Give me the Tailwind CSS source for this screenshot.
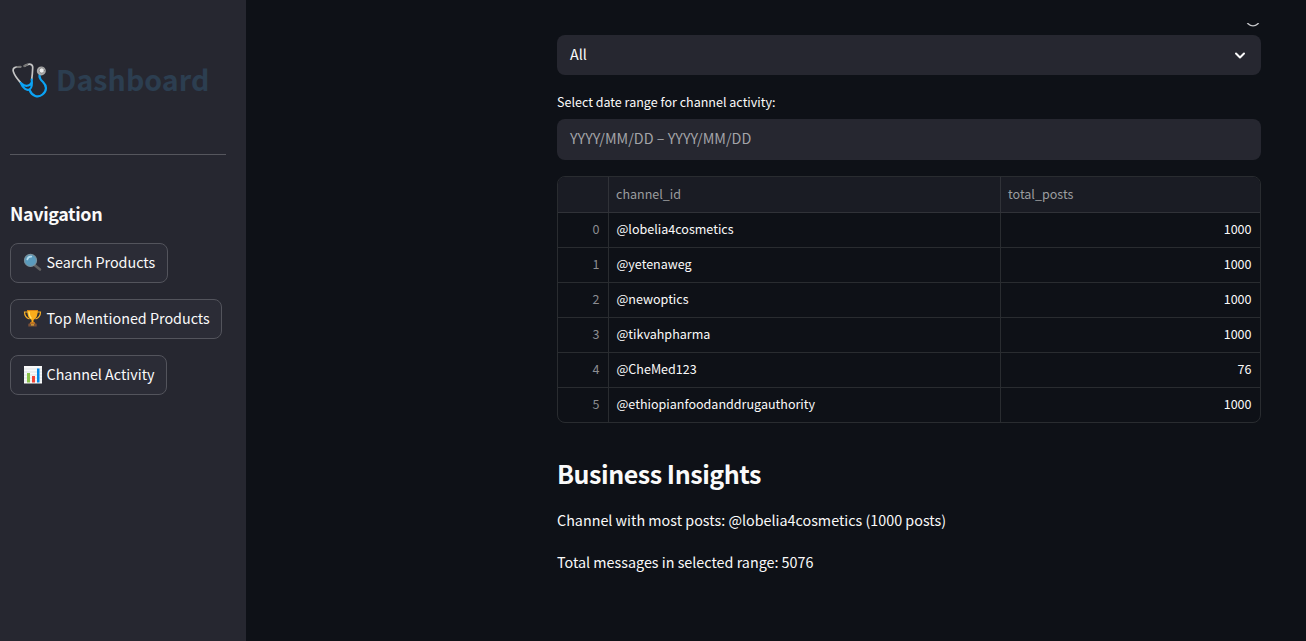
<!DOCTYPE html>
<html lang="en">
<head>
<meta charset="utf-8">
<title>Dashboard</title>
<script src="https://cdn.jsdelivr.net/npm/@tailwindcss/browser@4"></script>
</head>
<body class="flex h-screen overflow-hidden bg-[#0e1117] font-['Noto_Sans_CJK_SC','Open_Sans',sans-serif] text-[14.33px] text-[#fafafa] whitespace-nowrap">
<aside class="w-[246px] shrink-0 bg-[#262730] pl-2.5 pr-5">
  <h1 class="mt-[58px] flex h-11 items-center text-[28.600px] font-bold leading-[44px] text-[#2c3e50]">
    <svg class="ml-0.5 mr-2 size-9 shrink-0" viewBox="0 0 36 36" fill="none" stroke-linecap="round">
      <path d="M8.500 4.800C3 4.500 0 6 1.500 10C3 14.500 6 17.500 8.700 20.800M13 3.800C17.500 .9 21 2 20.700 6C20.500 10.500 20.300 13.500 19.700 17.500" stroke="#c5c5c5" stroke-width="1.700"/>
      <path d="M5.500 5L8.500 4.800M12.300 4L15 2.700" stroke="#777" stroke-width="2.200"/>
      <path d="M8.700 20.800C11 26.500 15 29.500 18 27C20 25.500 20.300 22.500 19.700 17.500M9.500 21.500C13 25 17.500 24.500 19.700 20.500" stroke="#0ba3f5" stroke-width="2.100"/>
      <path d="M17.500 28C20 34 26 36.300 30.500 32.500C35.500 28.500 34.500 23.500 31 20C27.500 17 26.500 14 28.500 11" stroke="#0ba3f5" stroke-width="2.200"/>
      <circle cx="29.300" cy="8.900" r="4.500" fill="#a9a9a9"/><circle cx="29.800" cy="8.500" r="2.600" fill="#eee" stroke="#777" stroke-width=".7"/>
    </svg>
    <span class="-mt-0.5 tracking-[.03px]">Dashboard</span>
  </h1>
  <hr class="mt-[52px] border-[#55565d]">
  <h3 class="mt-[46px] h-6 text-[17.900px] font-bold leading-6 tracking-[-.36px]">Navigation</h3>
  <nav class="mt-[18px] flex flex-col items-start gap-4 leading-[38px]">
    <button class="flex h-10 w-[158px] items-center rounded-lg border border-[#53545c] bg-[#2b2c36] pl-3">
      <svg class="-mt-px mr-[4.500px] size-[19px] shrink-0" viewBox="0 0 19 19"><path d="M11.500 12L17 16.500" stroke="#616161" stroke-width="2.600" stroke-linecap="round"/><circle cx="7.500" cy="7.400" r="6" fill="#5a9bbd" stroke="#78919d" stroke-width="1.200"/><path d="M4.300 6.500C4.800 4.500 6.300 3.600 8.300 3.700" fill="none" stroke="#b5dced" stroke-width="1.700" stroke-linecap="round"/></svg>
      <span class="-mt-0.5">Search Products</span>
    </button>
    <button class="flex h-10 w-[212px] items-center rounded-lg border border-[#53545c] bg-[#2b2c36] pl-3">
      <svg class="-mt-px mr-[4.500px] size-[19px] shrink-0" viewBox="0 0 19 19"><path d="M5 3H1.500C1.500 7 3 8.800 6.500 10M14 3H17.500C17.500 7 16 8.800 12.500 10" fill="none" stroke="#f4ad25" stroke-width="1.200"/><path d="M4.200 1.200H14.800C14.800 6 13.500 9.500 10.500 11V14H8.500V11C5.500 9.500 4.200 6 4.200 1.200Z" fill="#faad1b"/><path d="M6 2.500C6.200 6 6.800 8 8.500 9.500" fill="none" stroke="#ffe36d" stroke-width="1.300"/><path d="M4 1.500H15" stroke="#d78313"/><path d="M7.500 13H11.500L12.500 15H6.500Z" fill="#ca791d"/><path d="M5.300 14.700H13.700V17.500H5.300Z" fill="#795039"/><path d="M8 15.200H11V16.500H8Z" fill="#dfa52d"/></svg>
      <span class="-mt-0.5">Top Mentioned Products</span>
    </button>
    <button class="flex h-10 w-[157px] items-center rounded-lg border border-[#53545c] bg-[#2b2c36] pl-3">
      <svg class="-mt-px mr-[4.500px] size-[19px] shrink-0" viewBox="0 0 19 19"><path d="M1 1H19V18.500H1Z" fill="#fafafa"/><path d="M1 4H19M1 7H19M1 10H19M1 13H19M1 16H19" stroke="#cfd8dc" stroke-width=".7"/><path d="M4 8H7V17.500H4Z" fill="#8bc34a"/><path d="M9 11H12V17.500H9Z" fill="#f44336"/><path d="M14 3.500H16.500V17.500H14Z" fill="#0288e8"/></svg>
      <span class="-mt-0.5">Channel Activity</span>
    </button>
  </nav>
</aside>
<main class="ml-[311px] w-[704px]">
  <div class="mt-[23px] flex h-3 justify-end overflow-hidden"><svg class="block h-[5px] w-4" viewBox="0 0 16 5"><circle cx="8" cy="-3.600" r="6.500" fill="none" stroke="#c4c5c8" stroke-width="1.400"/></svg></div>
  <div class="flex h-10 items-center justify-between rounded-lg bg-[#262730] pl-[13px] pr-[15px]">
    <span class="-mt-0.5">All</span>
    <svg class="h-[9px] w-3" viewBox="0 0 12 9" fill="none" stroke="#fafafa" stroke-width="2" stroke-linecap="round" stroke-linejoin="round"><path d="M2 2.500L6 6.500L10 2.500"/></svg>
  </div>
  <div class="mt-4 h-[22px] text-[12.540px] leading-[22px]"><span>Select date range for channel activity:</span></div>
  <div class="mt-1.5 flex h-[41px] items-center rounded-lg bg-[#262730] pb-[3px] pl-[13px] text-[#a3a4a8]"><span>YYYY/MM/DD – YYYY/MM/DD</span></div>
  <div class="mt-4 overflow-hidden rounded-lg border border-[#292c30]">
    <table class="w-full table-fixed border-collapse text-[12.540px] leading-[32px]">
      <colgroup><col class="w-[50px]"><col class="w-[392px]"><col></colgroup>
      <thead class="bg-[#1a1c24] text-left text-[#9b9c9f]"><tr class="h-[35px] border-b border-[#303238]"><th class="border-r border-[#303238] p-0"></th><th class="border-r border-[#303238] p-0 pl-[7.500px] font-normal"><span>channel_id</span></th><th class="p-0 pl-[7.500px] font-normal"><span>total_posts</span></th></tr></thead>
      <tbody class="[&_td]:h-[35px] [&_td]:pt-0 [&_td]:pb-0.5 [&_td:nth-child(-n+2)]:border-r [&_td]:border-[#292c30] [&_tr:not(:last-child)]:border-b [&_tr]:border-[#292c30] [&_td:first-child]:pr-2 [&_td:first-child]:text-right [&_td:first-child]:text-[#8c8d91] [&_td:nth-child(2)]:pl-2 [&_td:last-child]:pr-[8.500px] [&_td:last-child]:text-right">
        <tr><td>0</td><td><span>@lobelia4cosmetics</span></td><td>1000</td></tr>
        <tr><td>1</td><td><span>@yetenaweg</span></td><td>1000</td></tr>
        <tr><td>2</td><td><span>@newoptics</span></td><td>1000</td></tr>
        <tr><td>3</td><td><span>@tikvahpharma</span></td><td>1000</td></tr>
        <tr><td>4</td><td><span>@CheMed123</span></td><td>76</td></tr>
        <tr><td>5</td><td><span>@ethiopianfoodanddrugauthority</span></td><td>1000</td></tr>
      </tbody>
    </table>
  </div>
  <h2 class="mt-8 h-9 text-[25px] font-bold leading-9 tracking-[-.45px]"><span>Business Insights</span></h2>
  <p class="mt-4 h-[26px] leading-[26px]"><span>Channel with most posts: @lobelia4cosmetics (1000 posts)</span></p>
  <p class="mt-4 h-[26px] leading-[26px]"><span>Total messages in selected range: 5076</span></p>
</main>
</body>
</html>
